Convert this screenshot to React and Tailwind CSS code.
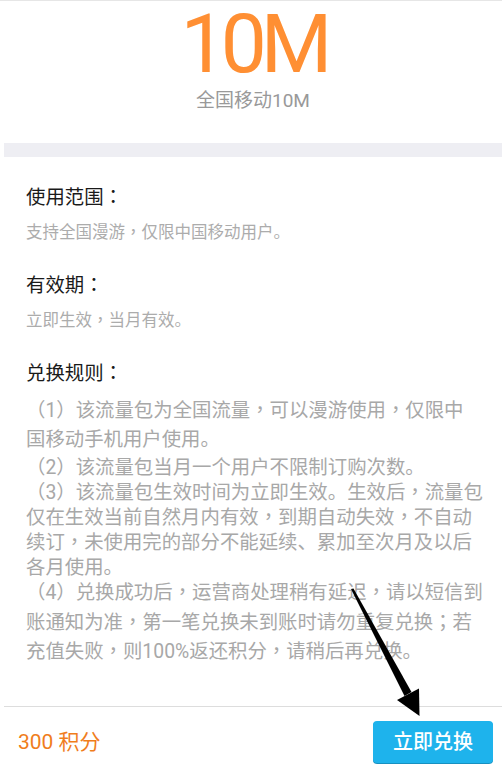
const font = { fontFamily: "Roboto, 'Noto Sans CJK SC', sans-serif" }

// 全角逗号、冒号、分号在原图里居中，用繁体字形
function T({ children }) {
  const parts = children.split(/([，：；])/)
  return parts.map((s, i) =>
    /^[，：；]$/.test(s) ? (
      <span key={i} className="font-['Noto_Sans_CJK_TC'] leading-[0px]">{s}</span>
    ) : (
      s
    )
  )
}

const rules = [
  { cls: 'leading-[28.3px]', lines: ['（1）该流量包为全国流量，可以漫游使用，仅限中', '国移动手机用户使用。'] },
  { cls: 'leading-[25px] mt-[1.5px]', lines: ['（2）该流量包当月一个用户不限制订购次数。'] },
  {
    cls: 'leading-[25px]',
    lines: [
      '（3）该流量包生效时间为立即生效。生效后，流量包',
      '仅在生效当前自然月内有效，到期自动失效，不自动',
      '续订，未使用完的部分不能延续、累加至次月及以后',
      '各月使用。',
    ],
  },
  {
    cls: 'leading-[29.2px] -mt-[2px]',
    lines: [
      '（4）兑换成功后，运营商处理稍有延迟，请以短信到',
      '账通知为准，第一笔兑换未到账时请勿重复兑换；若',
      '充值失败，则100%返还积分，请稍后再兑换。',
    ],
  },
]

function Arrow() {
  return (
    <svg className="absolute left-0 top-0 pointer-events-none" width="502" height="765" viewBox="0 0 502 765">
      <polygon points="351,589 353.5,588.5 411.5,692 404.5,696" fill="#000" />
      <polygon points="397,700 419,688.5 419.5,716" fill="#000" />
    </svg>
  )
}

export default function App() {
  return (
    <div className="relative w-[502px] h-[765px] bg-white flex flex-col overflow-hidden" style={font}>
      <div className="h-px bg-[#e6e6e6]" />

      <div className="flex flex-col items-center">
        <div className="mt-[2px] pl-[5px] text-[82px] leading-[82px] tracking-[-6px] text-[#ff8f33]">10M</div>
        <div className="mt-[4px] pl-[4px] text-[19px] leading-[24px] text-[#999999]">全国移动10M</div>
      </div>

      <div className="ml-[4px] mt-[30px] h-[14px] bg-[#eeeef3]" />

      <div className="flex-1 pl-[26px]">
        <div className="mt-[29px] text-[19.4px] leading-[24px] text-[#1a1a1a]"><T>使用范围：</T></div>
        <div className="mt-[13px] text-[16.5px] leading-[20px] text-[#acacac]"><T>支持全国漫游，仅限中国移动用户。</T></div>

        <div className="mt-[30.9px] text-[19.4px] leading-[24px] text-[#1a1a1a]"><T>有效期：</T></div>
        <div className="mt-[13.5px] text-[16.5px] leading-[20px] text-[#acacac]"><T>立即生效，当月有效。</T></div>

        <div className="mt-[31px] text-[19.4px] leading-[24px] text-[#1a1a1a]"><T>兑换规则：</T></div>

        <div className="mt-[11px] text-[19.4px] text-[#a8a8a8]">
          {rules.map((p, i) => (
            <div key={i} className={p.cls}>
              {p.lines.map((l, j) => (
                <div key={j} className="whitespace-nowrap"><T>{l}</T></div>
              ))}
            </div>
          ))}
        </div>
      </div>

      <div className="ml-[4px] h-px bg-[#dddddd]" />
      <div className="h-[58px] flex items-start justify-between pl-[18px] pr-[9px]">
        <div className="mt-[22px] text-[21px] leading-[26px] text-[#f07d1c]">300 积分</div>
        <button className="mt-[14px] w-[120px] h-[42px] rounded-[4px] bg-[#1eb3ec] text-white text-[20px] leading-[24px] font-medium shadow-[0_1px_0_#1790c0]">
          立即兑换
        </button>
      </div>

      <Arrow />
    </div>
  )
}
